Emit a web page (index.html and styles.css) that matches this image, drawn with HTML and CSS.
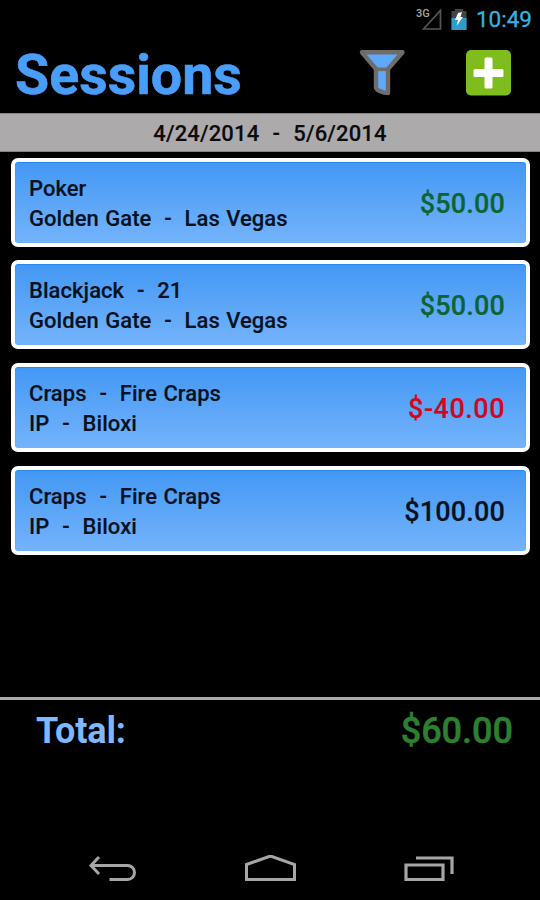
FILE: index.html
```
<!DOCTYPE html>
<html lang="en">
<head>
<meta charset="utf-8">
<title>Sessions</title>
<link rel="stylesheet" href="styles.css">
</head>
<body>
<div class="status">
  <svg class="signal" width="28" height="24" viewBox="0 0 28 24"><path d="M8.500 22 25.500 3.500V22Z" fill="none" stroke="#555" stroke-width="1.700"/><text x="1" y="10" class="network">3G</text></svg>
  <svg class="battery" width="16" height="22" viewBox="0 0 16 22"><path d="M0.500 3H4V1H12V3H15.500V22H0.500Z" fill="#454545"/><path d="M0.500 10H15.500V22H0.500Z" fill="#2d9cc8"/><path d="M7 5 11 4 9.500 9 12 9 5.500 18 7 12 4 12Z" fill="#fff"/></svg>
  <span class="clock">10:49</span>
</div>
<header class="header">
  <h1 class="title">Sessions</h1>
  <svg class="filter" width="48" height="48" viewBox="0 0 48 48"><path d="M4 3.300H44.500L30 20V44C25 44 18 41 18 38.500V20Z" fill="#5faaf8" stroke="#706c6c" stroke-width="4.400" stroke-linejoin="round"/><path d="M17 20.300H31.500" stroke="#706c6c" stroke-width="3.600"/></svg>
  <svg class="add" width="45" height="46" viewBox="0 0 45 46"><rect width="45" height="45.500" rx="5" fill="#7fbd1c"/><rect x="18.500" y="7.500" width="8" height="31" rx="1.500" fill="#fff"/><rect x="7.500" y="19" width="30" height="8" rx="1.500" fill="#fff"/></svg>
</header>
<div class="range">4/24/2014  -  5/6/2014</div>
<main class="list">
  <article class="card"><div class="info"><div>Poker</div><div>Golden Gate  -  Las Vegas</div></div><div class="amount win">$50.00</div></article>
  <article class="card"><div class="info"><div>Blackjack  -  21</div><div>Golden Gate  -  Las Vegas</div></div><div class="amount win">$50.00</div></article>
  <article class="card"><div class="info"><div>Craps  -  Fire Craps</div><div>IP  -  Biloxi</div></div><div class="amount loss">$-40.00</div></article>
  <article class="card"><div class="info"><div>Craps  -  Fire Craps</div><div>IP  -  Biloxi</div></div><div class="amount">$100.00</div></article>
</main>
<footer class="total"><span class="total-label">Total:</span><span class="total-value">$60.00</span></footer>
<nav class="nav">
  <svg width="50" height="30" viewBox="0 0 50 30"><path d="M11 2 3 10.500 11 19M3 10.500H39.500A7 7 0 0 1 39.500 24.500H21.500" fill="none" stroke="#a6a6a6" stroke-width="3"/></svg>
  <svg width="54" height="30" viewBox="0 0 54 30"><path d="M2.500 9.500 26.500 1 50.500 9.500V24.500H2.500Z" fill="none" stroke="#a6a6a6" stroke-width="3"/></svg>
  <svg width="52" height="30" viewBox="0 0 52 30"><path d="M3 10H40V24.500H3ZM13 3H49V19" fill="none" stroke="#a6a6a6" stroke-width="3.200"/></svg>
</nav>
</body>
</html>
```
FILE: styles.css
```
* { box-sizing: border-box; }
body {
  margin: 0;
  width: 540px;
  height: 900px;
  overflow: hidden;
  background: #000;
  color: #07121f;
  font-family: Roboto, "Liberation Sans", sans-serif;
  display: flex;
  flex-direction: column;
}
.status {
  height: 38px;
  flex: none;
  display: flex;
  align-items: center;
  justify-content: flex-end;
  padding-right: 8px;
}
.signal { margin-right: 8px; }
.battery { margin-right: 9px; }
.network { font-size: 11px; font-weight: 500; fill: #a5a5a5; }
.clock { font-size: 22.500px; line-height: 38px; color: #34b3e2; -webkit-text-stroke: 0.300px; }
.header {
  height: 75px;
  flex: none;
  display: flex;
  align-items: center;
  padding: 0 29px 5px 15px;
}
.title { margin: 5px auto 0 0; font-size: 55.500px; line-height: 66px; font-weight: 700; color: #4a9efb; -webkit-text-stroke: 0.600px; }
.filter { margin-right: 60px; }
.range {
  height: 39px;
  flex: none;
  background: #adaaac;
  border-top: 1px solid #858385;
  border-bottom: 1px solid #858385;
  text-align: center;
  font-size: 22px;
  line-height: 40px;
  font-weight: 500;
  white-space: pre;
  word-spacing: 1px;
  letter-spacing: 0.140px;
  color: #0c0c0c;
  -webkit-text-stroke: 0.150px;
}
.list {
  height: 545px;
  flex: none;
  display: flex;
  flex-direction: column;
  gap: 13.500px;
  padding: 5.500px 10px 0 11px;
}
.card {
  height: 89.200px;
  flex: none;
  display: flex;
  align-items: center;
  justify-content: space-between;
  padding: 3px 21px 0 14px;
  border: 4px solid #fff;
  border-radius: 7px;
  background: linear-gradient(#4398f5, #74b3fb);
  box-shadow: inset 0 1px 1px #2587ee;
}
.info {
  font-size: 22px;
  line-height: 30px;
  font-weight: 500;
  white-space: pre;
  word-spacing: 0.900px;
  letter-spacing: 0.050px;
  -webkit-text-stroke: 0.150px;
}
.amount { font-size: 27px; line-height: 34px; font-weight: 500; letter-spacing: 0.150px; -webkit-text-stroke: 0.200px; }
.win { color: #0d6430; }
.loss { color: #d4061d; letter-spacing: 0.500px; }
.total {
  height: 140px;
  flex: none;
  border-top: 3px solid #aaa;
  display: flex;
  justify-content: space-between;
  padding: 9px 27px 0 36px;
  font-size: 36px;
  line-height: 44px;
}
.total-label { font-weight: 700; color: #7eb8ff; letter-spacing: -0.150px; }
.total-value { font-weight: 500; color: #2c802f; -webkit-text-stroke: 0.500px; }
.nav {
  height: 60px;
  flex: none;
  display: flex;
  justify-content: space-between;
  align-items: center;
  padding: 6px 85px 0 88px;
}
```
